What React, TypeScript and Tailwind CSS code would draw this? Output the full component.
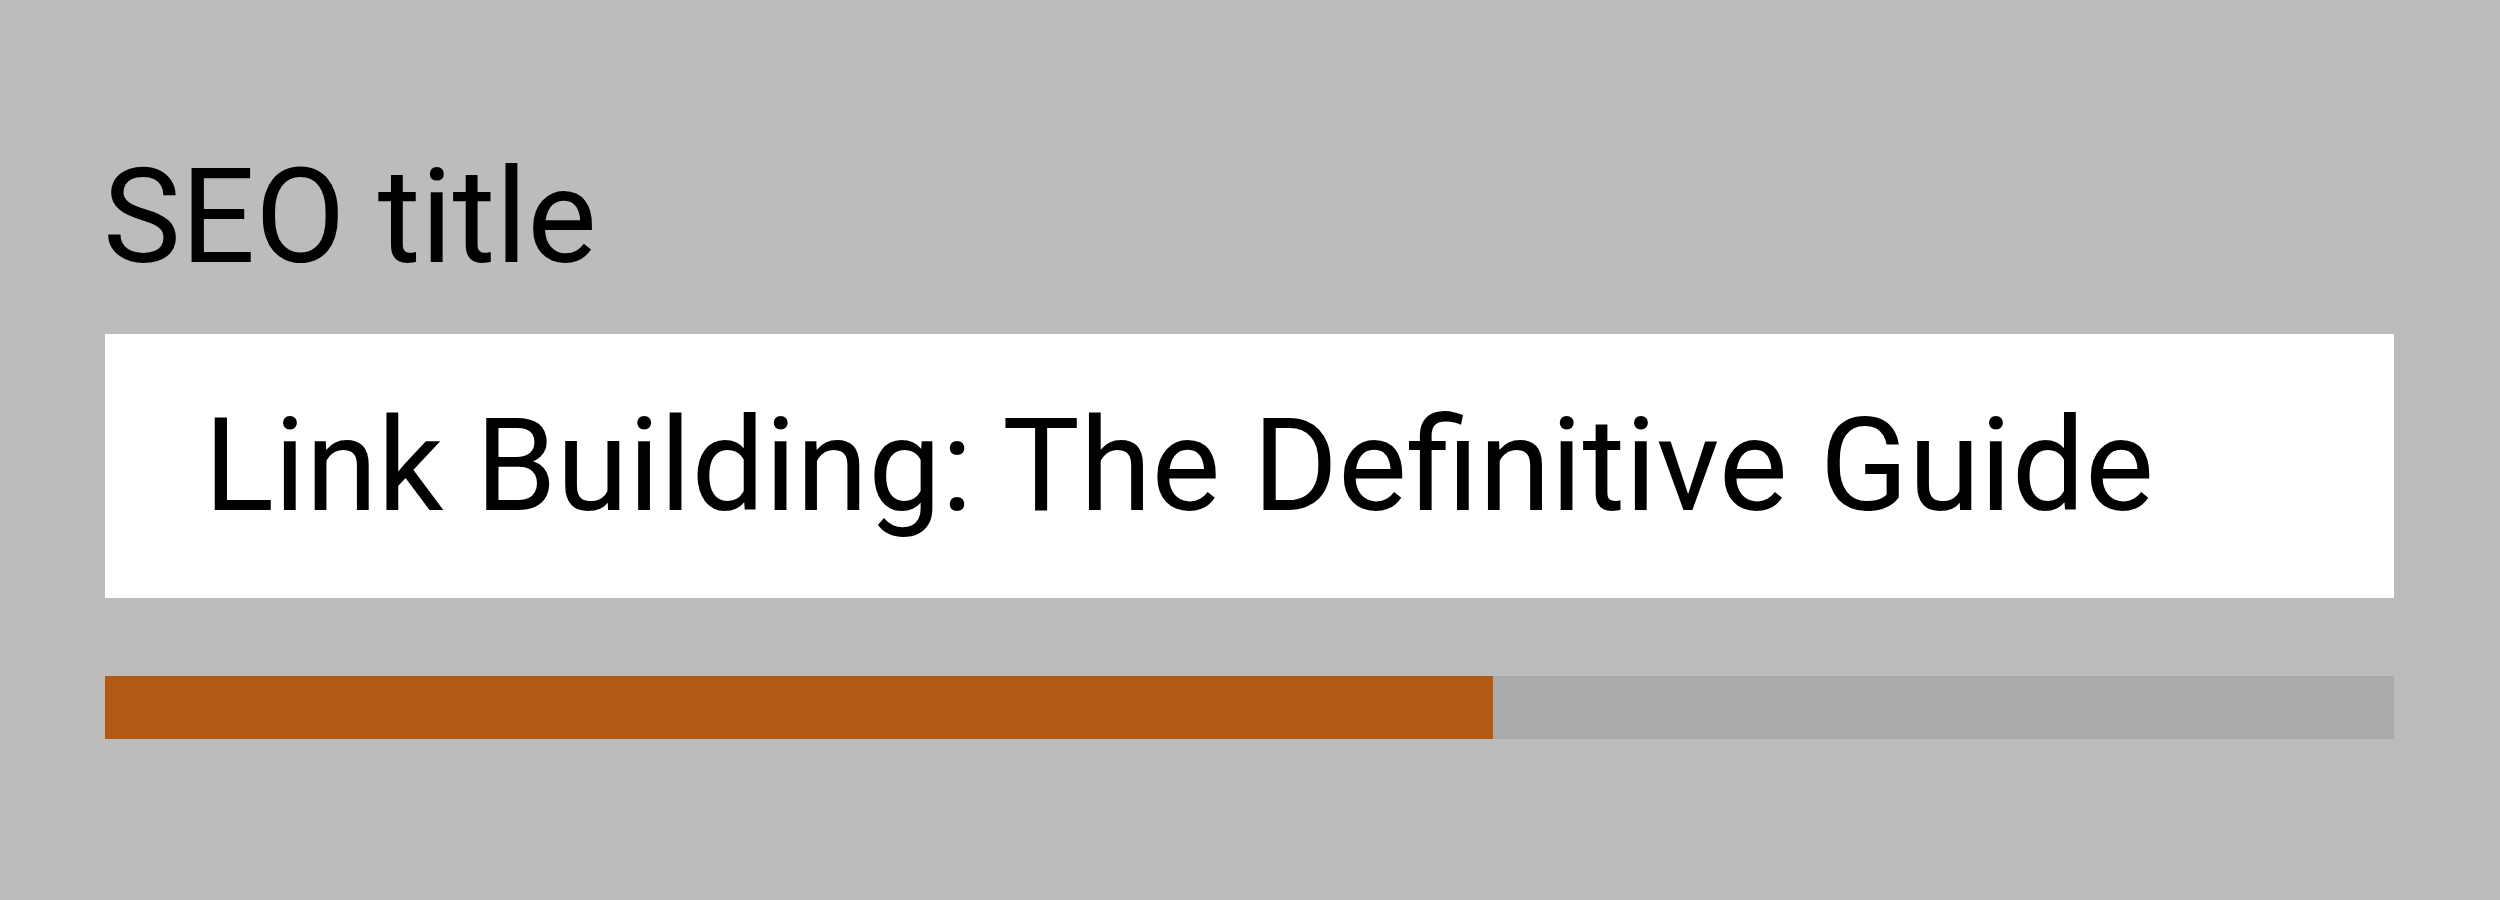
import React from 'react';

const title = 'Link Building: The Definitive Guide';
// share of the recommended title length already used
const fill = 1388 / 2289;

export default function App() {
  return (
    <div className="h-[900px] w-[2500px] bg-[#bcbcbc] pl-[105px] pt-[152px] font-['Roboto',sans-serif] text-black">
      <label htmlFor="seo-title" className="-ml-[2px] block text-[131px] leading-[131px]">
        SEO title
      </label>
      <div className="mt-[51px] flex h-[264px] w-[2289px] items-center bg-white pl-[99px]">
        <span id="seo-title" className="text-[130px] leading-[130px]">
          {title}
        </span>
      </div>
      <div className="mt-[78px] flex h-[63px] w-[2289px] bg-[#aaaaaa]">
        <div className="h-full bg-[#b05a15]" style={{ width: `${fill * 100}%` }} />
      </div>
    </div>
  );
}
